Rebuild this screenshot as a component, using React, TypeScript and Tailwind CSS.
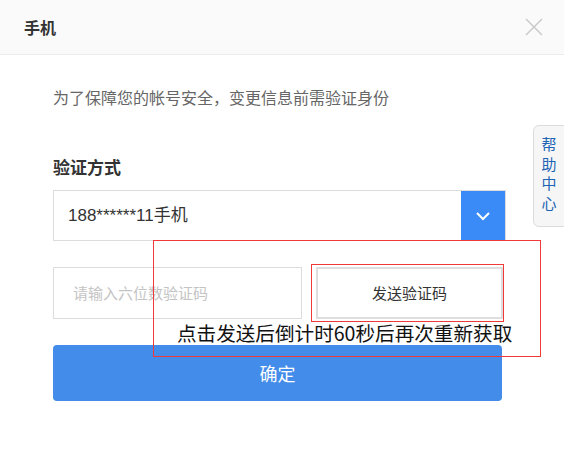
import React from "react";

const cjk = { fontFamily: '"Noto Sans CJK SC", "Noto Sans", sans-serif' };
const mixed = { fontFamily: '"Liberation Sans", "Noto Sans CJK SC", sans-serif' };

export default function App() {
  return (
    <div className="relative w-[564px] h-[467px] bg-white overflow-hidden" style={cjk}>
      {/* header */}
      <div className="h-[55px] bg-[#fafafa] border-b border-[#ececec] flex items-center justify-between pl-[24px] pr-[21px]">
        <div className="text-[16px] font-bold text-[#333] leading-none">手机</div>
        <svg width="18" height="18" viewBox="0 0 18 18" className="block">
          <path d="M1 1 L17 17 M17 1 L1 17" stroke="#c8c8c8" strokeWidth="1.4" fill="none" />
        </svg>
      </div>

      {/* body */}
      <div className="pl-[53px] pt-[30px] flex flex-col">
        <div className="text-[16px] leading-[24px] text-[#666]">为了保障您的帐号安全，变更信息前需验证身份</div>
        <div className="mt-[46px] text-[17px] leading-[24px] font-bold text-[#333]">验证方式</div>

        <div className="mt-[11px] w-[453px] h-[51px] border border-[#dcdcdc] flex items-stretch">
          <div className="flex-1 flex items-center pl-[14px] text-[17px] text-[#333]" style={mixed}>
            188******11手机
          </div>
          <div className="w-[44px] bg-[#3a8bf7] flex items-center justify-center">
            <svg width="16" height="10" viewBox="0 0 16 10">
              <path d="M2 2 L8 8 L14 2" stroke="#fff" strokeWidth="2" fill="none" />
            </svg>
          </div>
        </div>

        <div className="mt-[26px] flex gap-[14px] w-[450px]">
          <div className="w-[249px] h-[52px] border border-[#dcdcdc] flex items-center pl-[19px] text-[15px] text-[#c4c4c4]">
            请输入六位数验证码
          </div>
          <div className="w-[187px] h-[52px] border-2 border-[#dedede] flex items-center justify-center text-[15px] text-[#333]">
            发送验证码
          </div>
        </div>

        <div className="mt-[26px] w-[449px] h-[56px] rounded-[4px] bg-[#438ce9] flex items-center justify-center text-[18px] text-white">
          确定
        </div>
      </div>

      {/* help tab */}
      <div className="absolute left-[533px] top-[125px] w-[40px] h-[102px] bg-[#f6f6f6] border border-[#dcdcdc] rounded-l-[6px] flex flex-col items-center pt-[8px] pr-[8px] text-[15px] leading-[19.5px] text-[#1d64b5]">
        <span>帮</span>
        <span>助</span>
        <span>中</span>
        <span>心</span>
      </div>

      {/* annotations */}
      <div className="absolute left-[153px] top-[240px] w-[388px] h-[117px] border border-[#f03a3a]" />
      <div className="absolute left-[311px] top-[264px] w-[193px] h-[58px] border border-[#f03a3a]" />
      <div className="absolute left-[177px] top-[319px] text-[19.6px] leading-[28px] text-[#111]">
        点击发送后倒计时60秒后再次重新获取
      </div>
    </div>
  );
}
